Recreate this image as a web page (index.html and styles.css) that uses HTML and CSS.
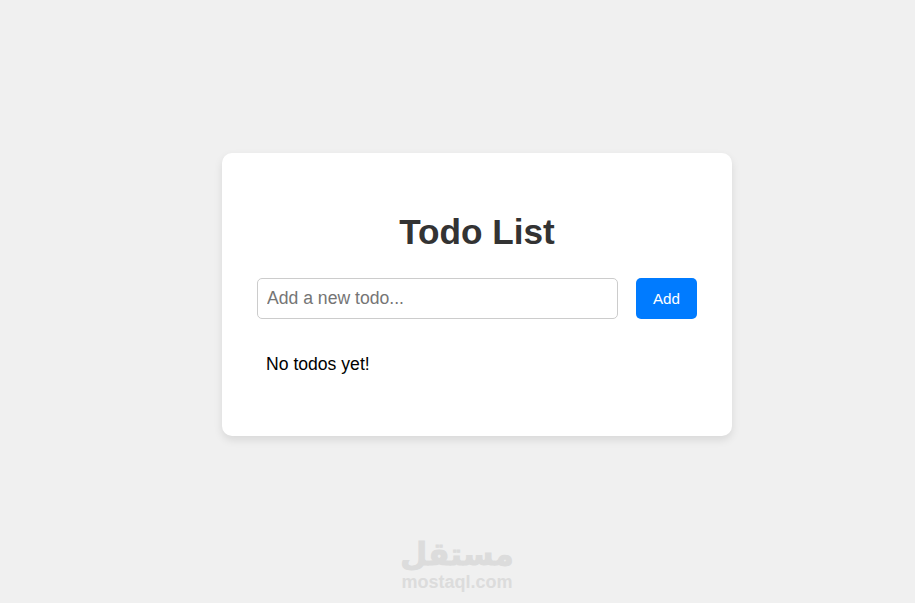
FILE: index.html
```html
<!DOCTYPE html>
<html lang="en">
<head>
    <meta charset="UTF-8">
    <meta name="viewport" content="width=device-width, initial-scale=1.0">
    <title>Todo List</title>
    <link rel="stylesheet" href="styles.css">
</head>
<body>
    <div class="card">
        <h1>Todo List</h1>
        <div class="add-row">
            <input class="todo-input" type="text" placeholder="Add a new todo...">
            <button class="add-btn">Add</button>
        </div>
        <p class="empty">No todos yet!</p>
    </div>

    <div class="watermark">
        <div class="watermark-ar" lang="ar" dir="rtl">مستقل</div>
        <div class="watermark-en">mostaql.com</div>
    </div>
</body>
</html>
```

FILE: styles.css
```css
html, body {
    height: 100%;
}

body {
    font-family: 'Liberation Sans', Arial, sans-serif;
    background-color: #f0f0f0;
    margin: 0;
    padding: 153px 0 0 222px;
    box-sizing: border-box;
    overflow: hidden;
    position: relative;
}

.card {
    background-color: white;
    border-radius: 10px;
    box-shadow: 0 4px 8px rgba(0, 0, 0, 0.1);
    width: 510px;
    height: 283px;
    padding: 35px;
    box-sizing: border-box;
}

h1 {
    color: #333;
    font-size: 35.2px;
    line-height: 41px;
    text-align: center;
    margin: 23px 0 26px;
}

.add-row {
    display: flex;
    gap: 18px;
}

.todo-input {
    width: 361px;
    height: 41px;
    box-sizing: border-box;
    padding: 0 9px;
    font-family: inherit;
    font-size: 17.6px;
    border: 1px solid #ccc;
    border-radius: 5px;
    background-color: white;
}

.todo-input::placeholder {
    color: #757575;
}

.add-btn {
    width: 61px;
    height: 41px;
    background-color: #007bff;
    color: white;
    border: none;
    border-radius: 5px;
    font-family: inherit;
    font-size: 15.2px;
    padding: 0;
}

.empty {
    color: black;
    font-size: 17.6px;
    line-height: 21px;
    margin: 35px 0 0 9px;
}

.watermark {
    position: absolute;
    left: 382px;
    top: 537px;
    width: 150px;
    text-align: center;
    color: #dcdcdc;
    font-weight: bold;
}

.watermark-ar {
    font-family: 'DejaVu Sans', sans-serif;
    font-size: 31px;
    line-height: 35px;
    -webkit-text-stroke: 1px #dcdcdc;
}

.watermark-en {
    font-family: 'Liberation Sans', Arial, sans-serif;
    font-size: 18px;
    line-height: 20px;
}
```
